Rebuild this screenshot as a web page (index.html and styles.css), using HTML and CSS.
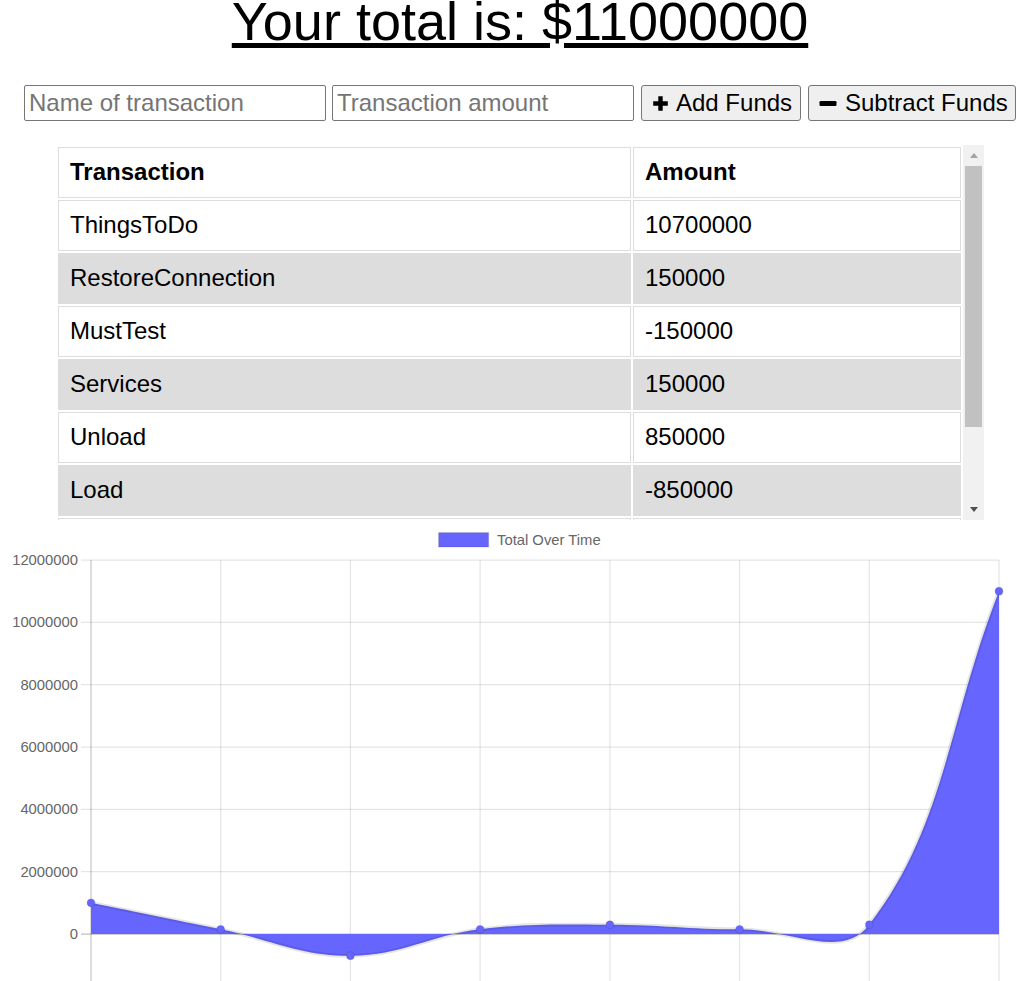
FILE: index.html
```html
<!DOCTYPE html>
<html lang="en">
<head>
<meta charset="utf-8">
<title>Budget Tracker</title>
<link rel="stylesheet" href="styles.css">
</head>
<body>
<h1 class="total">Your total is: $11000000</h1>

<div class="controls">
  <input class="field" type="text" placeholder="Name of transaction">
  <input class="field" type="number" placeholder="Transaction amount">
  <button class="btn btn-add" type="button">
    <svg class="icon" width="17" height="17" viewBox="0 0 17 17"><path d="M6.3 1.2h4.4v5.1h5.1v4.4h-5.1v5.1H6.3v-5.1H1.2V6.3h5.1z" fill="#000"/></svg>
    <span>Add Funds</span>
  </button>
  <button class="btn btn-sub" type="button">
    <svg class="icon" width="18" height="17" viewBox="0 0 18 17"><rect x="0.5" y="6" width="17" height="5" rx="1.2" fill="#000"/></svg>
    <span>Subtract Funds</span>
  </button>
</div>

<div class="table-wrap">
  <div class="table-clip">
    <table class="tx">
      <colgroup><col class="col-name"><col class="col-amt"></colgroup>
      <thead>
        <tr><th>Transaction</th><th>Amount</th></tr>
      </thead>
      <tbody>
        <tr><td>ThingsToDo</td><td>10700000</td></tr>
        <tr><td>RestoreConnection</td><td>150000</td></tr>
        <tr><td>MustTest</td><td>-150000</td></tr>
        <tr><td>Services</td><td>150000</td></tr>
        <tr><td>Unload</td><td>850000</td></tr>
        <tr><td>Load</td><td>-850000</td></tr>
        <tr><td>Transfer</td><td>-850000</td></tr>
        <tr><td>Deposit</td><td>1000000</td></tr>
      </tbody>
    </table>
  </div>
  <div class="scrollbar">
    <div class="sb-btn"><span class="arrow-up"></span></div>
    <div class="sb-thumb"></div>
    <div class="sb-track"></div>
    <div class="sb-btn"><span class="arrow-down"></span></div>
  </div>
</div>

<svg class="chart" width="1028" height="461" viewBox="0 520 1028 461">
  <!-- legend -->
  <rect x="438.6" y="532.6" width="50" height="14.4" fill="#6666ff" stroke="rgba(0,0,0,0.1)" stroke-width="1.25"/>
  <text class="legend" x="497" y="545">Total Over Time</text>

  <!-- horizontal grid -->
  <g stroke="rgba(0,0,0,0.1)" stroke-width="1.25">
    <line x1="81" y1="560" x2="999" y2="560"/>
    <line x1="81" y1="622.3" x2="999" y2="622.3"/>
    <line x1="81" y1="684.7" x2="999" y2="684.7"/>
    <line x1="81" y1="747" x2="999" y2="747"/>
    <line x1="81" y1="809.3" x2="999" y2="809.3"/>
    <line x1="81" y1="871.7" x2="999" y2="871.7"/>
    <line x1="81" y1="996.3" x2="999" y2="996.3"/>
  </g>
  <line x1="81" y1="934" x2="999" y2="934" stroke="rgba(0,0,0,0.25)" stroke-width="1.25"/>

  <!-- vertical grid -->
  <g stroke="rgba(0,0,0,0.1)" stroke-width="1.25">
    <line x1="220.7" y1="560" x2="220.7" y2="990"/>
    <line x1="350.4" y1="560" x2="350.4" y2="990"/>
    <line x1="480.1" y1="560" x2="480.1" y2="990"/>
    <line x1="609.9" y1="560" x2="609.9" y2="990"/>
    <line x1="739.6" y1="560" x2="739.6" y2="990"/>
    <line x1="869.3" y1="560" x2="869.3" y2="990"/>
    <line x1="999" y1="560" x2="999" y2="990"/>
  </g>
  <line x1="91" y1="560" x2="91" y2="990" stroke="rgba(0,0,0,0.22)" stroke-width="1.25"/>

  <!-- y tick labels -->
  <g class="ticks">
    <text x="78" y="565">12000000</text>
    <text x="78" y="627.3">10000000</text>
    <text x="78" y="689.7">8000000</text>
    <text x="78" y="752">6000000</text>
    <text x="78" y="814.3">4000000</text>
    <text x="78" y="876.7">2000000</text>
    <text x="78" y="939">0</text>
  </g>

  <!-- area -->
  <path fill="#6666ff" d="M91,902.8 C142.9,913.4 168.8,918.7 220.7,929.3 C272.6,939.9 298.5,955.8 350.4,955.8 C402.3,955.8 427.7,935.6 480.1,929.3 C531.5,923.1 558,924.65 609.9,924.65 C661.8,924.65 687.7,929.3 739.6,929.3 C791.5,929.3 841.7,960.7 869.3,924.65 C945.4,825.4 947.1,724.6 999,591.2 L999,934 L91,934 Z"/>
  <path fill="none" stroke="rgba(0,0,0,0.1)" stroke-width="3.75" d="M91,902.8 C142.9,913.4 168.8,918.7 220.7,929.3 C272.6,939.9 298.5,955.8 350.4,955.8 C402.3,955.8 427.7,935.6 480.1,929.3 C531.5,923.1 558,924.65 609.9,924.65 C661.8,924.65 687.7,929.3 739.6,929.3 C791.5,929.3 841.7,960.7 869.3,924.65 C945.4,825.4 947.1,724.6 999,591.2"/>

  <!-- points -->
  <g fill="#6666ff" stroke="rgba(0,0,0,0.1)" stroke-width="1.25">
    <circle cx="91" cy="902.8" r="3.9"/>
    <circle cx="220.7" cy="929.3" r="3.9"/>
    <circle cx="350.4" cy="955.8" r="3.9"/>
    <circle cx="480.1" cy="929.3" r="3.9"/>
    <circle cx="609.9" cy="924.65" r="3.9"/>
    <circle cx="739.6" cy="929.3" r="3.9"/>
    <circle cx="869.3" cy="924.65" r="3.9"/>
    <circle cx="999" cy="591.2" r="3.9"/>
  </g>
</svg>
</body>
</html>
```

FILE: styles.css
```css
html, body {
  margin: 0;
  padding: 0;
  background: #fff;
}

body {
  font-family: "Liberation Sans", Arial, sans-serif;
  color: #000;
  width: 1028px;
  height: 981px;
  overflow: hidden;
}

.total {
  margin: 0;
  padding-left: 12px;
  font-size: 54px;
  font-weight: normal;
  line-height: 43px;
  text-align: center;
  text-decoration: underline;
}

.controls {
  display: flex;
  align-items: center;
  margin-top: 42px;
  padding-left: 24px;
  gap: 6px;
  height: 36px;
}

.field {
  box-sizing: border-box;
  width: 302px;
  height: 36px;
  margin: 0;
  padding: 1px 2px 1px 4px;
  border: 1px solid #767676;
  border-radius: 2px;
  font-family: "Liberation Sans", Arial, sans-serif;
  font-size: 24px;
  color: #000;
  background: #fff;
  -moz-appearance: textfield;
}

.field::-webkit-outer-spin-button,
.field::-webkit-inner-spin-button {
  -webkit-appearance: none;
  margin: 0;
}

.field::placeholder {
  color: #757575;
}

.btn {
  box-sizing: border-box;
  display: flex;
  align-items: center;
  height: 36px;
  margin: 0 0 0 1px;
  padding: 0 0 0 10px;
  border: 1px solid #767676;
  border-radius: 3px;
  background: #efefef;
  font-family: "Liberation Sans", Arial, sans-serif;
  font-size: 24px;
  color: #000;
  gap: 7px;
  white-space: nowrap;
  overflow: hidden;
}

.btn-add {
  width: 160px;
}

.btn-sub {
  width: 208px;
  gap: 8px;
}

.icon {
  display: block;
  flex: none;
}

.table-wrap {
  display: flex;
  margin-top: 24px;
  margin-left: 56px;
  height: 375px;
}

.table-clip {
  width: 907px;
  height: 375px;
  overflow: hidden;
}

.tx {
  table-layout: fixed;
  width: 907px;
  border-collapse: separate;
  border-spacing: 2px;
  font-size: 24px;
}

.col-name { width: 573px; }
.col-amt { width: 328px; }

.tx th,
.tx td {
  box-sizing: border-box;
  padding: 9px 11px 11px 11px;
  line-height: 29px;
  border: 1px solid #dddddd;
  text-align: left;
  background: #fff;
  white-space: nowrap;
}

.tx th {
  font-weight: bold;
}

.tx tbody tr:nth-child(even) td {
  background: #dddddd;
}

.scrollbar {
  display: flex;
  flex-direction: column;
  width: 21px;
  height: 375px;
  background: #f1f1f1;
}

.sb-btn {
  flex: none;
  height: 21px;
  display: flex;
  align-items: center;
  justify-content: center;
}

.arrow-up {
  width: 0;
  height: 0;
  border-left: 4.5px solid transparent;
  border-right: 4.5px solid transparent;
  border-bottom: 5px solid #a3a3a3;
}

.arrow-down {
  width: 0;
  height: 0;
  border-left: 4.5px solid transparent;
  border-right: 4.5px solid transparent;
  border-top: 5px solid #505050;
}

.sb-thumb {
  flex: none;
  height: 261px;
  margin: 0 2px;
  background: #c1c1c1;
}

.sb-track {
  flex: 1;
}

.chart {
  display: block;
}

.chart text {
  font-family: "Liberation Sans", Arial, sans-serif;
  font-size: 14.8px;
  fill: #666;
}

.chart .ticks text {
  text-anchor: end;
}
```
